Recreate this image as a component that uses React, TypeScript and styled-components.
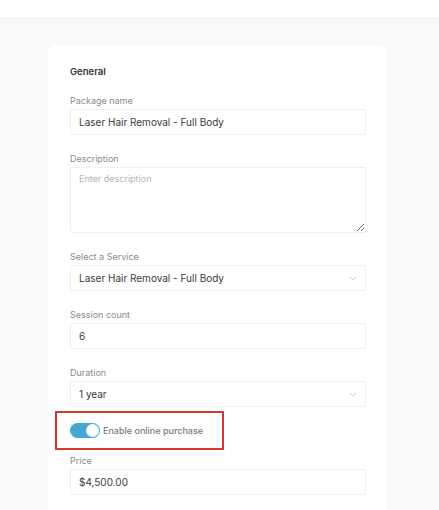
import React from 'react'
import styled, { createGlobalStyle } from 'styled-components'

const GlobalStyle = createGlobalStyle`
  body {
    margin:0;
    background:#f8f9fa;
    font-family:Inter, "Noto Sans", sans-serif;
  }
`

const TopBar = styled.div`
  height:18px;
  background:#fff;
  border-bottom:1px solid #efefef;
`

const Page = styled.div`
  padding:26px 0 0 48px;
`

const Card = styled.div`
  width:339px;
  box-sizing:border-box;
  background:#fff;
  border-radius:8px 8px 0 0;
  padding:20px 21px 20px 22px;
  min-height:470px;
`

const Heading = styled.h4`
  margin:0 0 16px;
  font-size:9.5px;
  line-height:14px;
  font-weight:600;
  color:#333;
`

const Field = styled.div`
  display:flex;
  flex-direction:column;
  gap:2px;
  margin-bottom:${(p:{$gap?:number})=>p.$gap ?? 18}px;
`

const Label = styled.label`
  font-size:9px;
  line-height:12px;
  color:#8a8a8a;
`

const Input = styled.input`
  height:26px;
  box-sizing:border-box;
  border:1px solid #efefef;
  border-radius:2px;
  padding:0 8px;
  font-family:inherit;
  font-size:10px;
  color:#3a3a3a;
  background:#fff;
  outline:none;
`

const TextArea = styled.textarea`
  height:66px;
  box-sizing:border-box;
  border:1px solid #efefef;
  border-radius:2px;
  padding:5px 8px;
  font-family:inherit;
  font-size:9px;
  color:#3a3a3a;
  outline:none;
  &::placeholder { color:#b4b4b4; }
`

const SelectBox = styled.div`
  height:26px;
  box-sizing:border-box;
  border:1px solid #efefef;
  border-radius:2px;
  padding:0 8px;
  display:flex;
  align-items:center;
  justify-content:space-between;
  font-size:10px;
  color:#3a3a3a;
`

const Chevron = () => (
  <svg width="8" height="5" viewBox="0 0 8 5" fill="none">
    <path d="M1 1l3 3 3-3" stroke="#c4c4c4" strokeWidth="0.9" />
  </svg>
)

const Highlight = styled.div`
  display:flex;
  align-items:center;
  gap:3px;
  width:fit-content;
  height:39px;
  box-sizing:border-box;
  margin:4px 0 5px -15px;
  padding:0 19px 0 13px;
  border:2px solid #d9362b;
`

const Track = styled.div`
  width:30px;
  height:15px;
  border-radius:8px;
  background:#44a7d2;
  position:relative;
`

const Knob = styled.span`
  position:absolute;
  right:1px;
  top:1px;
  width:13px;
  height:13px;
  border-radius:50%;
  background:#fff;
`

const ToggleText = styled.span`
  font-size:9px;
  font-weight:500;
  color:#7a7a7a;
`

export default function App() {
  return (
    <>
      <GlobalStyle />
      <TopBar />
      <Page>
        <Card>
          <Heading>General</Heading>
          <Field>
            <Label>Package name</Label>
            <Input defaultValue="Laser Hair Removal - Full Body" />
          </Field>
          <Field>
            <Label>Description</Label>
            <TextArea placeholder="Enter description" />
          </Field>
          <Field>
            <Label>Select a Service</Label>
            <SelectBox>Laser Hair Removal - Full Body<Chevron /></SelectBox>
          </Field>
          <Field>
            <Label>Session count</Label>
            <Input defaultValue="6" />
          </Field>
          <Field $gap={0}>
            <Label>Duration</Label>
            <SelectBox>1 year<Chevron /></SelectBox>
          </Field>
          <Highlight>
            <Track><Knob /></Track>
            <ToggleText>Enable online purchase</ToggleText>
          </Highlight>
          <Field>
            <Label>Price</Label>
            <Input defaultValue="$4,500.00" />
          </Field>
        </Card>
      </Page>
    </>
  )
}
